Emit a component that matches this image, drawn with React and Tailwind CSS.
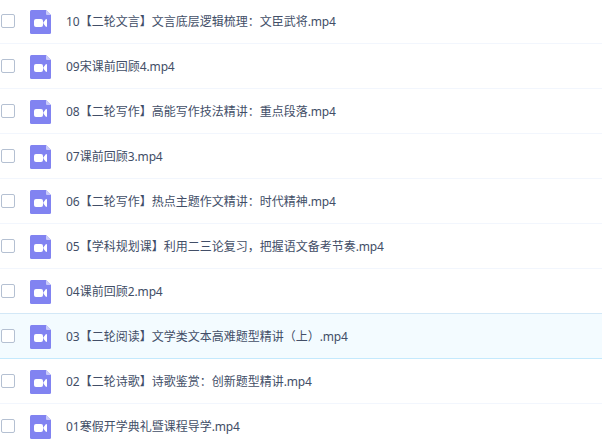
const files = [
  { id: 10, name: "10【二轮文言】文言底层逻辑梳理：文臣武将" },
  { id: 9, name: "09宋课前回顾4" },
  { id: 8, name: "08【二轮写作】高能写作技法精讲：重点段落" },
  { id: 7, name: "07课前回顾3" },
  { id: 6, name: "06【二轮写作】热点主题作文精讲：时代精神" },
  { id: 5, name: "05【学科规划课】利用二三论复习，把握语文备考节奏" },
  { id: 4, name: "04课前回顾2" },
  { id: 3, name: "03【二轮阅读】文学类文本高难题型精讲（上）" },
  { id: 2, name: "02【二轮诗歌】诗歌鉴赏：创新题型精讲" },
  { id: 1, name: "01寒假开学典礼暨课程导学" },
];

const HOVERED = 3;

function rowColors(id) {
  if (id === HOVERED) return "bg-[#f3fbff] border-[#c4e9fd]";
  // the row above the hovered one draws its top line
  if (id === HOVERED + 1) return "border-[#d3e8f7]";
  return "border-[#f2f6fd]";
}

function VideoFileIcon() {
  return (
    <svg className="w-[21px] h-6 shrink-0" viewBox="0 0 21 24" aria-hidden="true">
      <path d="M1.5 0H16L21 5V22.5Q21 24 19.5 24H1.5Q0 24 0 22.5V1.5Q0 0 1.5 0Z" fill="#8183f1" />
      <path d="M16 0L21 5H17Q16 5 16 4Z" fill="#c9caf9" />
      <rect x="4" y="9" width="9" height="8" rx="2" fill="#fff" />
      <path d="M13.5 12.2L15.6 9.4Q17 8.4 17 10V16Q17 17.6 15.6 16.6L13.5 13.8Z" fill="#fff" />
    </svg>
  );
}

function FileRow({ file }) {
  return (
    <li className={`flex items-center h-[45px] shrink-0 pl-px border-b ${rowColors(file.id)}`}>
      <span
        role="checkbox"
        aria-checked="false"
        aria-label={file.name}
        className="w-3.5 h-3.5 shrink-0 rounded-xs border border-[#b4c0d2] bg-white"
      />
      <div className="ml-[15px] mt-0.5">
        <VideoFileIcon />
      </div>
      <span className="ml-[15px] mt-0.5 text-xs leading-4 whitespace-nowrap text-[#424e67]">
        {file.name}
        <span className="tracking-[-0.2px]">.mp4</span>
      </span>
    </li>
  );
}

export default function App() {
  return (
    <div className="w-[602px] h-[440px] overflow-hidden bg-white font-['Noto_Sans','Noto_Sans_CJK_SC',sans-serif]">
      {/* flow-root keeps the list's negative margin inside the clipped area */}
      <div className="flow-root">
        <ul className="flex flex-col -mt-px">
          {files.map((file) => (
            <FileRow key={file.id} file={file} />
          ))}
        </ul>
      </div>
    </div>
  );
}
